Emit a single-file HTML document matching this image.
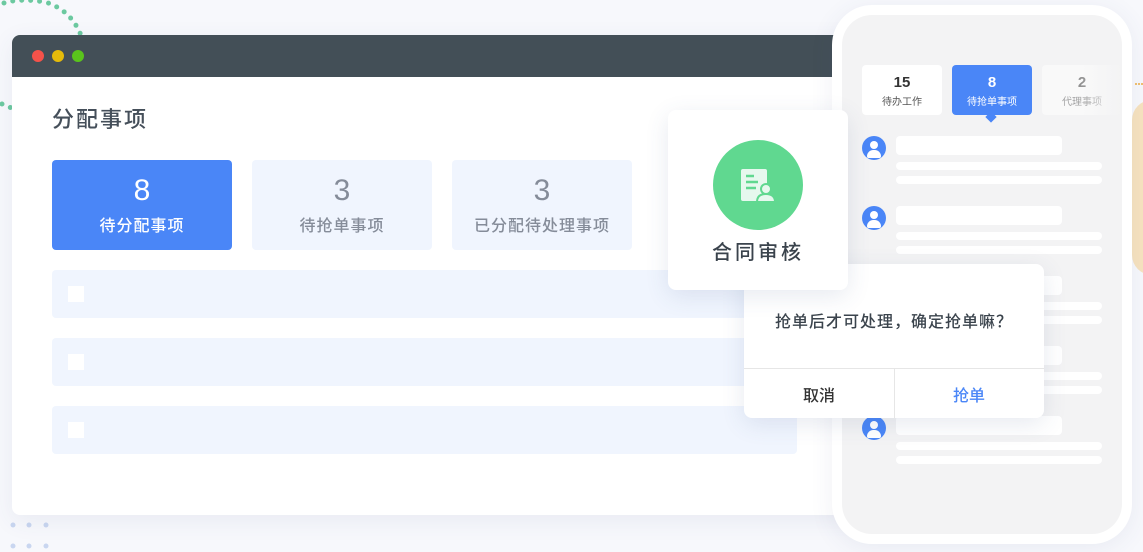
<!DOCTYPE html>
<html><head><meta charset="utf-8"><style>
*{margin:0;padding:0;box-sizing:border-box}
body{width:1143px;height:552px;overflow:hidden;background:#f7f8fc;font-family:"Liberation Sans","Noto Sans CJK SC",sans-serif;position:relative}
.abs{position:absolute}
.win{left:12px;top:35px;width:860px;height:480px;background:#fff;border-radius:8px;overflow:hidden;box-shadow:0 6px 24px rgba(60,80,130,.08)}
.bar{height:42px;background:#434f57;position:relative}
.dot{position:absolute;top:15px;width:12px;height:12px;border-radius:50%}
.card{position:absolute;top:125px;width:180px;height:90px;border-radius:4px;background:#f0f5fe;text-align:center;color:#858c99}
.card .n{font-size:30px;margin-top:14px;line-height:34px}
.card .t{font-size:16px;margin-top:4px;letter-spacing:1px;font-weight:500}
.row{position:absolute;left:40px;width:745px;height:48px;background:#f0f5fe;border-radius:4px}
.row i{position:absolute;left:16px;top:16px;width:16px;height:16px;background:#fff}
.phone{left:832px;top:5px;width:300px;height:539px;background:#fff;border-radius:40px;box-shadow:0 4px 24px rgba(60,80,130,.08)}
.scr{position:absolute;left:10px;top:10px;width:280px;height:519px;background:#f3f3f4;border-radius:30px;overflow:hidden}
.tab{position:absolute;top:50px;width:80px;height:50px;border-radius:4px;background:#fff;text-align:center;color:#333}
.tab b{display:block;font-size:15px;margin-top:9px;line-height:17px}
.tab span{display:block;font-size:10px;margin-top:2px;color:#555}
.av{position:absolute;left:20px;width:24px;height:24px;border-radius:50%;background:#4a86f7;overflow:hidden}
.av:before{content:"";position:absolute;left:8px;top:5px;width:8px;height:8px;border-radius:50%;background:#fff}
.av:after{content:"";position:absolute;left:5px;top:14px;width:14px;height:8px;border-radius:7px 7px 2px 2px;background:#fff}
.l{position:absolute;left:54px;background:#fff;border-radius:4px}
</style></head><body>
<svg class="abs" style="left:0;top:0" width="120" height="120"><path d="M4 3 Q20 -2 45 2 Q72 10 82 38" fill="none" stroke="#6cc9a0" stroke-width="5" stroke-linecap="round" stroke-dasharray="0 9"/><path d="M2 104 L14 109" fill="none" stroke="#6cc9a0" stroke-width="5" stroke-linecap="round" stroke-dasharray="0 9"/></svg>
<div class="abs" style="left:1132px;top:100px;width:40px;height:175px;background:#f7e3bf;border-radius:20px 0 0 20px"></div>
<div class="abs" style="left:1135px;top:83px;width:8px;height:2px;border-top:2px dotted #f0c070"></div>
<svg class="abs" style="left:10px;top:520px" width="60" height="32"><g fill="#c9d6f0"><circle cx="3" cy="5" r="2.5"/><circle cx="19" cy="5" r="2.5"/><circle cx="36" cy="5" r="2.5"/><circle cx="3" cy="26" r="2.5"/><circle cx="19" cy="26" r="2.5"/><circle cx="36" cy="26" r="2.5"/></g></svg>
<div class="abs win">
 <div class="bar"><div class="dot" style="left:20px;background:#f5524a"></div><div class="dot" style="left:40px;background:#e5bb0a"></div><div class="dot" style="left:60px;background:#5ac41c"></div></div>
 <div class="abs" style="left:40px;top:67px;font-size:22px;color:#454f5a;letter-spacing:2px;font-weight:500">分配事项</div>
 <div class="card" style="left:40px;background:#4a86f7;color:#fff"><div class="n">8</div><div class="t">待分配事项</div></div>
 <div class="card" style="left:240px"><div class="n">3</div><div class="t">待抢单事项</div></div>
 <div class="card" style="left:440px"><div class="n">3</div><div class="t">已分配待处理事项</div></div>
 <div class="row" style="top:235px"><i></i></div>
 <div class="row" style="top:303px"><i></i></div>
 <div class="row" style="top:371px"><i></i></div>
</div>
<div class="abs phone"><div class="scr">
 <div class="tab" style="left:20px"><b>15</b><span>待办工作</span></div>
 <div class="tab" style="left:110px;background:#4a86f7;color:#fff"><b>8</b><span style="color:#fff">待抢单事项</span></div>
 <div class="abs" style="left:145px;top:98px;width:8px;height:8px;background:#4a86f7;transform:rotate(45deg)"></div>
 <div class="tab" style="left:200px;opacity:.5"><b>2</b><span>代理事项</span></div>
 <div class="abs" style="left:240px;top:40px;width:40px;height:80px;background:linear-gradient(90deg,rgba(243,243,244,0),#f3f3f4)"></div>
 <div class="av" style="top:121px"></div><div class="l" style="top:121px;width:166px;height:19px"></div><div class="l" style="top:147px;width:206px;height:8px"></div><div class="l" style="top:161px;width:206px;height:8px"></div>
 <div class="av" style="top:191px"></div><div class="l" style="top:191px;width:166px;height:19px"></div><div class="l" style="top:217px;width:206px;height:8px"></div><div class="l" style="top:231px;width:206px;height:8px"></div>
 <div class="l" style="top:261px;width:166px;height:19px"></div><div class="l" style="top:287px;width:206px;height:8px"></div><div class="l" style="top:301px;width:206px;height:8px"></div>
 <div class="l" style="top:331px;width:166px;height:19px"></div><div class="l" style="top:357px;width:206px;height:8px"></div><div class="l" style="top:371px;width:206px;height:8px"></div>
 <div class="av" style="top:401px"></div><div class="l" style="top:401px;width:166px;height:19px"></div><div class="l" style="top:427px;width:206px;height:8px"></div><div class="l" style="top:441px;width:206px;height:8px"></div>
</div></div>
<div class="abs" style="left:744px;top:264px;width:300px;height:154px;background:#fff;border-radius:8px;box-shadow:0 6px 24px rgba(60,80,130,.12)">
 <div style="text-align:center;font-size:16px;color:#3a434c;margin-top:44px;letter-spacing:1px;font-weight:500">抢单后才可处理，确定抢单嘛？</div>
 <div class="abs" style="left:0;top:104px;width:300px;height:1px;background:#e6e6e6"></div>
 <div class="abs" style="left:150px;top:104px;width:1px;height:50px;background:#e6e6e6"></div>
 <div class="abs" style="left:0;top:118px;width:150px;text-align:center;font-size:16px;color:#333;font-weight:500">取消</div>
 <div class="abs" style="left:150px;top:118px;width:150px;text-align:center;font-size:16px;color:#4a86f7;font-weight:500">抢单</div>
</div>
<div class="abs" style="left:668px;top:110px;width:180px;height:180px;background:#fff;border-radius:8px;box-shadow:0 6px 24px rgba(60,80,130,.12)">
 <div class="abs" style="left:45px;top:30px;width:90px;height:90px;border-radius:50%;background:#60d890"></div>
 <svg class="abs" style="left:72px;top:58px" width="36" height="36" viewBox="0 0 36 36"><rect x="1" y="1" width="26" height="32" rx="2" fill="#e6f8ee"/><g stroke="#60d890" stroke-width="2.5"><line x1="6" y1="8" x2="14" y2="8"/><line x1="6" y1="14" x2="18" y2="14"/><line x1="6" y1="20" x2="16" y2="20"/></g><circle cx="26" cy="21" r="5" fill="#e6f8ee" stroke="#60d890" stroke-width="2"/><path d="M17 34 Q17 26 26 26 Q35 26 35 34Z" fill="#e6f8ee" stroke="#60d890" stroke-width="2"/></svg>
 <div class="abs" style="left:0;top:126px;width:180px;text-align:center;font-size:20px;color:#3a434c;letter-spacing:3px;font-weight:500">合同审核</div>
</div>
</body></html>
